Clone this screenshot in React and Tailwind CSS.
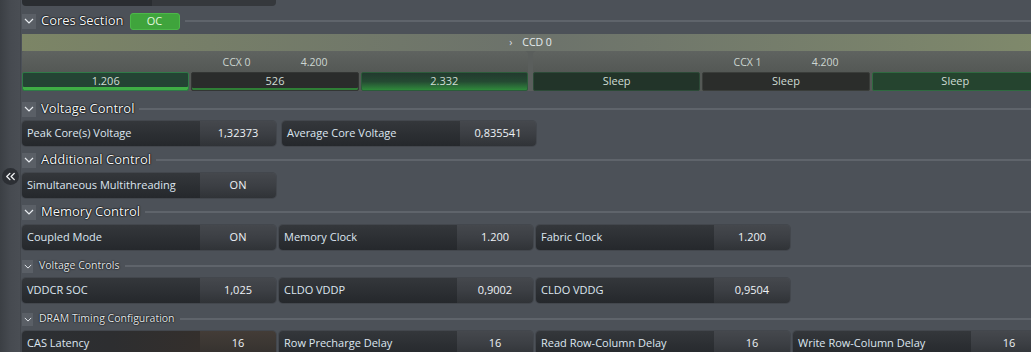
import { ChevronsLeft } from "lucide-react";

function ChevronBox({ small }) {
  return (
    <div
      className={
        small
          ? "w-[11px] h-[13px] bg-[#5a5f66] flex items-center justify-center shrink-0"
          : "w-[14px] h-[15px] bg-[#5a5f66] flex items-center justify-center shrink-0"
      }
    >
      <svg width={small ? 8 : 10} height={small ? 5 : 6} viewBox="0 0 10 6">
        <polyline points="1,1 5,5 9,1" fill="none" stroke="#e8ecf0" strokeWidth="1.2" />
      </svg>
    </div>
  );
}

function Header({ title, small, badge }) {
  return (
    <div className="flex items-center h-[20px]">
      <ChevronBox small={small} />
      <span
        className={
          small
            ? "ml-[6px] text-[10.5px] text-[#e4e8ec] [text-shadow:0_0_2px_#000,0_0_1px_#000] whitespace-nowrap"
            : "ml-[5px] text-[13px] text-[#f4f6f8] [text-shadow:0_0_2px_#000,0_0_1px_#000,0_0_1px_#000] whitespace-nowrap"
        }
      >
        {title}
      </span>
      {badge}
      <div className="flex-1 h-[2px] bg-[#5f646b] ml-[5px]" />
    </div>
  );
}

function Cell({ label, value, warm }) {
  return (
    <div className="flex h-[25px] w-[254px] rounded-[4px] overflow-hidden shrink-0 shadow-[0_0_0_1px_#43474d]">
      <div
        className={
          warm
            ? "w-[178px] flex items-center pl-[5px] bg-gradient-to-r from-[#2c2f33] via-[#2d2e30] to-[#342f2c] text-[11px] text-[#dde6f0] whitespace-nowrap"
            : "w-[178px] flex items-center pl-[5px] bg-gradient-to-b from-[#34373b] to-[#25282c] text-[11px] text-[#dde6f0] whitespace-nowrap"
        }
      >
        {label}
      </div>
      <div
        className={
          warm
            ? "flex-1 flex items-center justify-center bg-gradient-to-b from-[#433c37] via-[#3c3733] to-[#33302e] text-[11px] text-[#eef2f6]"
            : "flex-1 flex items-center justify-center bg-gradient-to-b from-[#45484d] via-[#3c3f44] to-[#303337] text-[11px] text-[#eef2f6]"
        }
      >
        {value}
      </div>
    </div>
  );
}

function CoreCell({ text, kind }) {
  const styles = {
    active:
      "bg-[#244434] border border-[#2f7a47] shadow-[inset_0_-3px_0_#3fae45]",
    dark: "bg-[#2a2c2b] border border-[#333634] shadow-[inset_0_-2px_0_#2f7f36]",
    glow: "bg-gradient-to-b from-[#223a2e] via-[#244a32] to-[#2f8a3a] border border-[#2b5c3a]",
    sleep: "bg-[#223429] border border-[#2c4a37]",
    sleepDark: "bg-[#2b2d2b] border border-[#3a3d3a]",
    sleepGreen: "bg-[#25442f] border border-[#2f6a40]",
  };
  return (
    <div
      className={
        "flex-1 h-[19px] rounded-[2px] flex items-center justify-center text-[11px] text-[#cfdcd4] " +
        styles[kind]
      }
    >
      {text}
    </div>
  );
}

function CcxPanel({ name, freq, cells }) {
  return (
    <div className="w-[506px] shrink-0 flex flex-col">
      <div className="h-[21px] rounded-t-[4px] bg-gradient-to-b from-[#5f6360] to-[#545855] flex items-center justify-center gap-[50px] text-[10.5px] text-[#cdd6d1] pt-[3px]">
        <span>{name}</span>
        <span>{freq}</span>
      </div>
      <div className="flex gap-[2px] bg-[#545855]">
        {cells.map((c, i) => (
          <CoreCell key={i} text={c.text} kind={c.kind} />
        ))}
      </div>
    </div>
  );
}

export default function App() {
  return (
    <div className="w-[1031px] h-[352px] overflow-hidden flex items-start bg-[#4c5158] font-['Open_Sans',sans-serif]">
      <div className="w-[21px] h-[352px] shrink-0 bg-gradient-to-r from-[#3b3f44] via-[#464a50] to-[#4a4e54] border-r border-[#42464c] flex flex-col items-center">
        <div className="mt-[168px] w-[17px] h-[17px] rounded-full bg-[#2c2f34] flex items-center justify-center">
          <ChevronsLeft size={15} color="#f0f2f4" strokeWidth={2.2} />
        </div>
      </div>

      <div className="w-[1017px] shrink-0 ml-[1px] flex flex-col *:shrink-0">
        <div className="w-[254px] h-[6px] rounded-b-[4px] overflow-hidden flex">
          <div className="w-[130px] bg-[#2a2d31]" />
          <div className="flex-1 bg-[#35383c]" />
        </div>

        <div className="mt-[5px]">
          <Header
            title="Cores Section"
            badge={
              <div className="ml-[6px] w-[50px] h-[17px] rounded-[3px] bg-[#3fa43c] border border-[#4cb849] flex items-center justify-center text-[11px] text-[#e2f7df] shrink-0">
                OC
              </div>
            }
          />
        </div>

        <div className="mt-[3px] h-[17px] bg-gradient-to-r from-[#7c8566] via-[#6c726b] to-[#7f896b] flex items-center justify-center gap-[10px] text-[10.5px] text-[#e6ecef]">
          <span className="text-[#d8dee2]">›</span>
          <span>CCD 0</span>
        </div>

        <div className="flex gap-[5px] bg-[#5a5e5c]">
          <CcxPanel
            name="CCX 0"
            freq="4.200"
            cells={[
              { text: "1.206", kind: "active" },
              { text: "526", kind: "dark" },
              { text: "2.332", kind: "glow" },
            ]}
          />
          <CcxPanel
            name="CCX 1"
            freq="4.200"
            cells={[
              { text: "Sleep", kind: "sleep" },
              { text: "Sleep", kind: "sleepDark" },
              { text: "Sleep", kind: "sleepGreen" },
            ]}
          />
        </div>

        <div className="mt-[8px]">
          <Header title="Voltage Control" />
        </div>
        <div className="mt-[2px] flex gap-[6px]">
          <Cell label="Peak Core(s) Voltage" value="1,32373" />
          <Cell label="Average Core Voltage" value="0,835541" />
        </div>

        <div className="mt-[4px]">
          <Header title="Additional Control" />
        </div>
        <div className="mt-[3px] flex gap-[3px]">
          <Cell label="Simultaneous Multithreading" value="ON" />
        </div>

        <div className="mt-[4px]">
          <Header title="Memory Control" />
        </div>
        <div className="mt-[3px] flex gap-[3px]">
          <Cell label="Coupled Mode" value="ON" />
          <Cell label="Memory Clock" value="1.200" />
          <Cell label="Fabric Clock" value="1.200" />
        </div>

        <div className="mt-[6px]">
          <Header title="Voltage Controls" small />
        </div>
        <div className="mt-[2px] flex gap-[3px]">
          <Cell label="VDDCR SOC" value="1,025" />
          <Cell label="CLDO VDDP" value="0,9002" />
          <Cell label="CLDO VDDG" value="0,9504" />
        </div>

        <div className="mt-[6px]">
          <Header title="DRAM Timing Configuration" small />
        </div>
        <div className="mt-[2px] flex gap-[3px]">
          <Cell label="CAS Latency" value="16" warm />
          <Cell label="Row Precharge Delay" value="16" />
          <Cell label="Read Row-Column Delay" value="16" />
          <Cell label="Write Row-Column Delay" value="16" />
        </div>
      </div>
    </div>
  );
}
